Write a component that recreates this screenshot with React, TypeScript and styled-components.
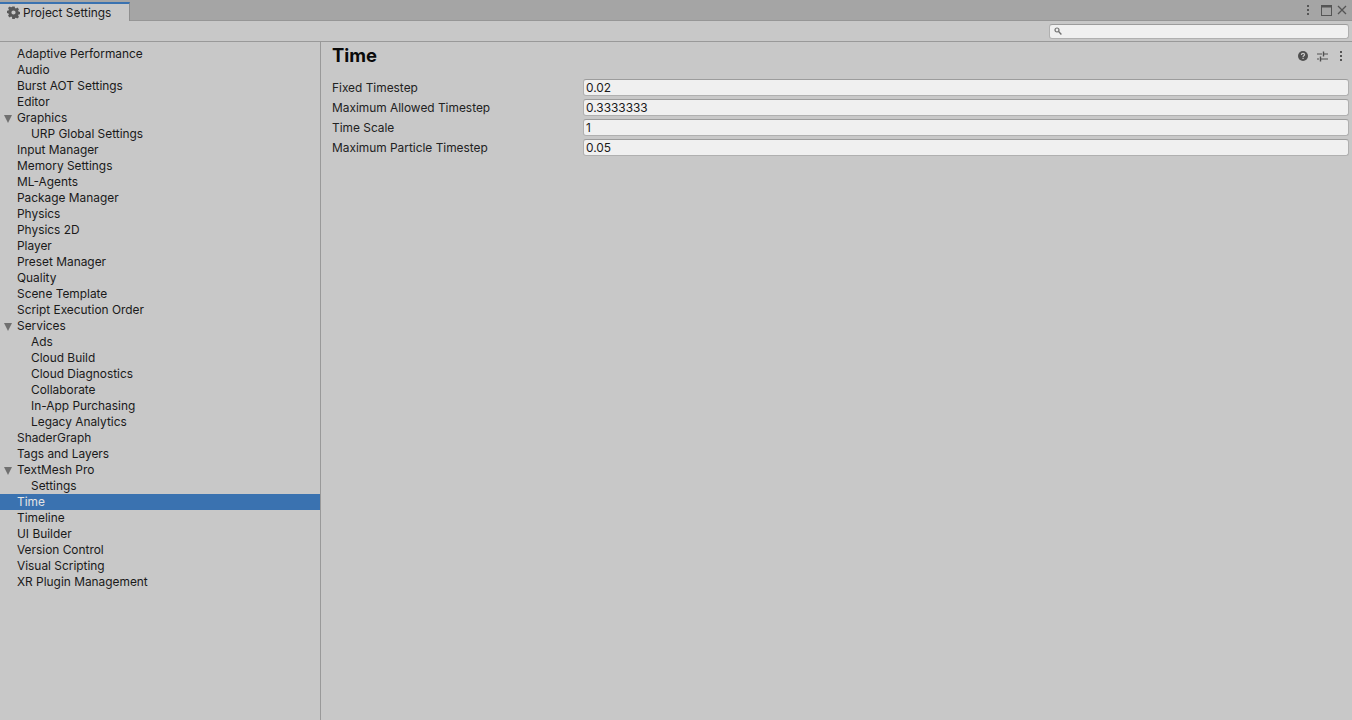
import React from "react";
import styled, { createGlobalStyle } from "styled-components";

type SectionItem = {
  name: string;
  depth?: number;
  expanded?: boolean;
  selected?: boolean;
};

const sections: SectionItem[] = [
  { name: "Adaptive Performance" },
  { name: "Audio" },
  { name: "Burst AOT Settings" },
  { name: "Editor" },
  { name: "Graphics", expanded: true },
  { name: "URP Global Settings", depth: 1 },
  { name: "Input Manager" },
  { name: "Memory Settings" },
  { name: "ML-Agents" },
  { name: "Package Manager" },
  { name: "Physics" },
  { name: "Physics 2D" },
  { name: "Player" },
  { name: "Preset Manager" },
  { name: "Quality" },
  { name: "Scene Template" },
  { name: "Script Execution Order" },
  { name: "Services", expanded: true },
  { name: "Ads", depth: 1 },
  { name: "Cloud Build", depth: 1 },
  { name: "Cloud Diagnostics", depth: 1 },
  { name: "Collaborate", depth: 1 },
  { name: "In-App Purchasing", depth: 1 },
  { name: "Legacy Analytics", depth: 1 },
  { name: "ShaderGraph" },
  { name: "Tags and Layers" },
  { name: "TextMesh Pro", expanded: true },
  { name: "Settings", depth: 1 },
  { name: "Time", selected: true },
  { name: "Timeline" },
  { name: "UI Builder" },
  { name: "Version Control" },
  { name: "Visual Scripting" },
  { name: "XR Plugin Management" },
];

const fields = [
  { label: "Fixed Timestep", value: "0.02" },
  { label: "Maximum Allowed Timestep", value: "0.3333333" },
  { label: "Time Scale", value: "1" },
  { label: "Maximum Particle Timestep", value: "0.05" },
];

const GearIcon = () => (
  <svg width="13" height="13" viewBox="0 0 13 13">
    <path
      fill="#585858"
      fillRule="evenodd"
      d="M5.3.5h2.4l.3 1.6 1 .4 1.3-.9 1.7 1.7-.9 1.3.4 1 1.6.3v2.4l-1.6.3-.4 1 .9 1.3-1.7 1.7-1.3-.9-1 .4-.3 1.6H5.3L5 10.9l-1-.4-1.3.9L1 9.7l.9-1.3-.4-1-1.6-.3V4.7l1.6-.3.4-1L1 2.1 2.7.4l1.3.9 1-.4zM6.5 4.4a2.1 2.1 0 1 0 0 4.2 2.1 2.1 0 0 0 0-4.2z"
    />
  </svg>
);

const KebabIcon = () => (
  <svg width="4" height="12" viewBox="0 0 4 12">
    <rect x="1" y="1" width="2" height="2" fill="#555555" />
    <rect x="1" y="5" width="2" height="2" fill="#555555" />
    <rect x="1" y="9" width="2" height="2" fill="#555555" />
  </svg>
);

const MaximizeIcon = () => (
  <svg width="11" height="11" viewBox="0 0 11 11">
    <rect x="0.5" y="0.5" width="10" height="10" fill="none" stroke="#555555" />
    <rect x="0.5" y="0.5" width="10" height="2" fill="#555555" />
  </svg>
);

const CloseIcon = () => (
  <svg width="10" height="10" viewBox="0 0 10 10">
    <path d="M1 1l8 8M9 1l-8 8" stroke="#555555" strokeWidth="1.3" />
  </svg>
);

const SearchIcon = () => (
  <svg width="8" height="8" viewBox="0 0 8 8">
    <circle cx="3" cy="3" r="2" fill="none" stroke="#707070" strokeWidth="1.2" />
    <path d="M4.6 4.6L7.4 7.4" stroke="#707070" strokeWidth="1.4" />
  </svg>
);

const HelpIcon = () => (
  <svg width="10" height="10" viewBox="0 0 10 10">
    <circle cx="5" cy="5" r="5" fill="#505050" />
    <path
      d="M3.4 3.9c0-1 .7-1.6 1.6-1.6s1.6.6 1.6 1.4c0 1.1-1.5 1.1-1.5 2.2"
      fill="none"
      stroke="#c8c8c8"
      strokeWidth="1.2"
    />
    <rect x="4.4" y="6.8" width="1.3" height="1.2" fill="#c8c8c8" />
  </svg>
);

const PresetIcon = () => (
  <svg width="13" height="11" viewBox="0 0 13 11">
    <path d="M0 3h5M7 3h4M0 8h2M4 8h7" stroke="#505050" strokeWidth="1" fill="none" />
    <path d="M6.5 .5v5M3.5 5.5v5" stroke="#505050" strokeWidth="1.4" fill="none" />
  </svg>
);

export default function App() {
  return (
    <>
      <GlobalStyle />
      <Window>
        <TabBar>
          <Tab>
            <GearIcon />
            <TabLabel>Project Settings</TabLabel>
          </Tab>
          <WindowActions>
            <TabMenu>
              <KebabIcon />
            </TabMenu>
            <MaximizeIcon />
            <CloseIcon />
          </WindowActions>
        </TabBar>
        <SearchBar>
          <SearchField>
            <SearchIcon />
          </SearchField>
        </SearchBar>
        <Body>
          <Sidebar>
            {sections.map((item) => (
              <SectionRow key={item.name} $depth={item.depth || 0} $selected={!!item.selected}>
                {item.expanded ? <Arrow /> : null}
                {item.name}
              </SectionRow>
            ))}
          </Sidebar>
          <Content>
            <Header>
              <Title>Time</Title>
              <HeaderActions>
                <HelpIcon />
                <PresetIcon />
                <KebabIcon />
              </HeaderActions>
            </Header>
            <Fields>
              {fields.map((field) => (
                <FieldRow key={field.label}>
                  <FieldLabel>{field.label}</FieldLabel>
                  <FieldValue>{field.value}</FieldValue>
                </FieldRow>
              ))}
            </Fields>
          </Content>
        </Body>
      </Window>
    </>
  );
}

const GlobalStyle = createGlobalStyle`
  html, body {
    margin: 0;
    padding: 0;
    height: 100%;
    overflow: hidden;
  }

  body {
    background-color: #c8c8c8;
    font-family: Inter, "Liberation Sans", sans-serif;
    font-size: 11.9px;
    color: #1a1a1a;
  }
`;

const Window = styled.div`
  display: flex;
  flex-direction: column;
  width: 1352px;
  height: 720px;
  background-color: #c8c8c8;
`;

const TabBar = styled.div`
  display: flex;
  justify-content: space-between;
  height: 21px;
  box-sizing: border-box;
  background-color: #a5a5a5;
  border-bottom: 1px solid #969696;
`;

const Tab = styled.div`
  display: flex;
  align-items: center;
  gap: 3px;
  width: 130px;
  height: 19px;
  margin: 2px 0 -1px;
  padding: 0 0 0 7px;
  box-sizing: border-box;
  background-color: #c8c8c8;
  border-top: 2px solid #3a72b0;
  border-right: 1px solid #8f8f8f;
`;

const TabLabel = styled.span`
  color: #1c1c1c;
`;

const WindowActions = styled.div`
  display: flex;
  align-items: center;
  gap: 5px;
  padding: 0 5px 0 0;
`;

const TabMenu = styled.div`
  display: flex;
  margin-right: 6px;
`;

const SearchBar = styled.div`
  display: flex;
  justify-content: flex-end;
  align-items: center;
  height: 21px;
  padding-right: 3px;
  box-sizing: border-box;
  border-bottom: 1px solid #999999;
`;

const SearchField = styled.div`
  display: flex;
  align-items: center;
  width: 300px;
  height: 15px;
  padding-left: 4px;
  box-sizing: border-box;
  background-color: #f0f0f0;
  border: 1px solid #b0b0b0;
  border-top-color: #9c9c9c;
  border-radius: 3px;
`;

const Body = styled.div`
  display: flex;
  flex: 1;
  min-height: 0;
`;

const Sidebar = styled.div`
  width: 321px;
  padding-top: 4px;
  box-sizing: border-box;
  border-right: 1px solid #999999;
`;

const SectionRow = styled.div<{ $depth: number; $selected: boolean }>`
  position: relative;
  height: 16px;
  line-height: 16px;
  padding-left: ${(p) => 17 + p.$depth * 14}px;
  white-space: nowrap;
  background-color: ${(p) => (p.$selected ? "#3a72b0" : "transparent")};
  color: ${(p) => (p.$selected ? "#e4e4e4" : "#1a1a1a")};
`;

const Arrow = styled.span`
  position: absolute;
  left: 4px;
  top: 5px;
  width: 0;
  height: 0;
  border-left: 4.5px solid transparent;
  border-right: 4.5px solid transparent;
  border-top: 8px solid #707070;
`;

const Content = styled.div`
  flex: 1;
  min-width: 0;
  padding: 0 3px 0 11px;
`;

const Header = styled.div`
  display: flex;
  justify-content: space-between;
  align-items: center;
  height: 28px;
`;

const Title = styled.h1`
  margin: -2px 0 0;
  font-size: 18.4px;
  font-weight: 700;
  color: #0a0a0a;
`;

const HeaderActions = styled.div`
  display: flex;
  align-items: center;
  gap: 9px;
  padding: 0 6px 0 0;
`;

const Fields = styled.div`
  display: flex;
  flex-direction: column;
  gap: 3px;
  padding-top: 9px;
`;

const FieldRow = styled.div`
  display: flex;
  align-items: center;
  height: 17px;
`;

const FieldLabel = styled.div`
  width: 251px;
  flex-shrink: 0;
  color: #222222;
`;

const FieldValue = styled.div`
  flex: 1;
  height: 17px;
  line-height: 16px;
  padding-left: 2px;
  box-sizing: border-box;
  background-color: #f0f0f0;
  border: 1px solid #b0b0b0;
  border-top-color: #9c9c9c;
  border-radius: 3px;
  color: #1a1a1a;
`;
